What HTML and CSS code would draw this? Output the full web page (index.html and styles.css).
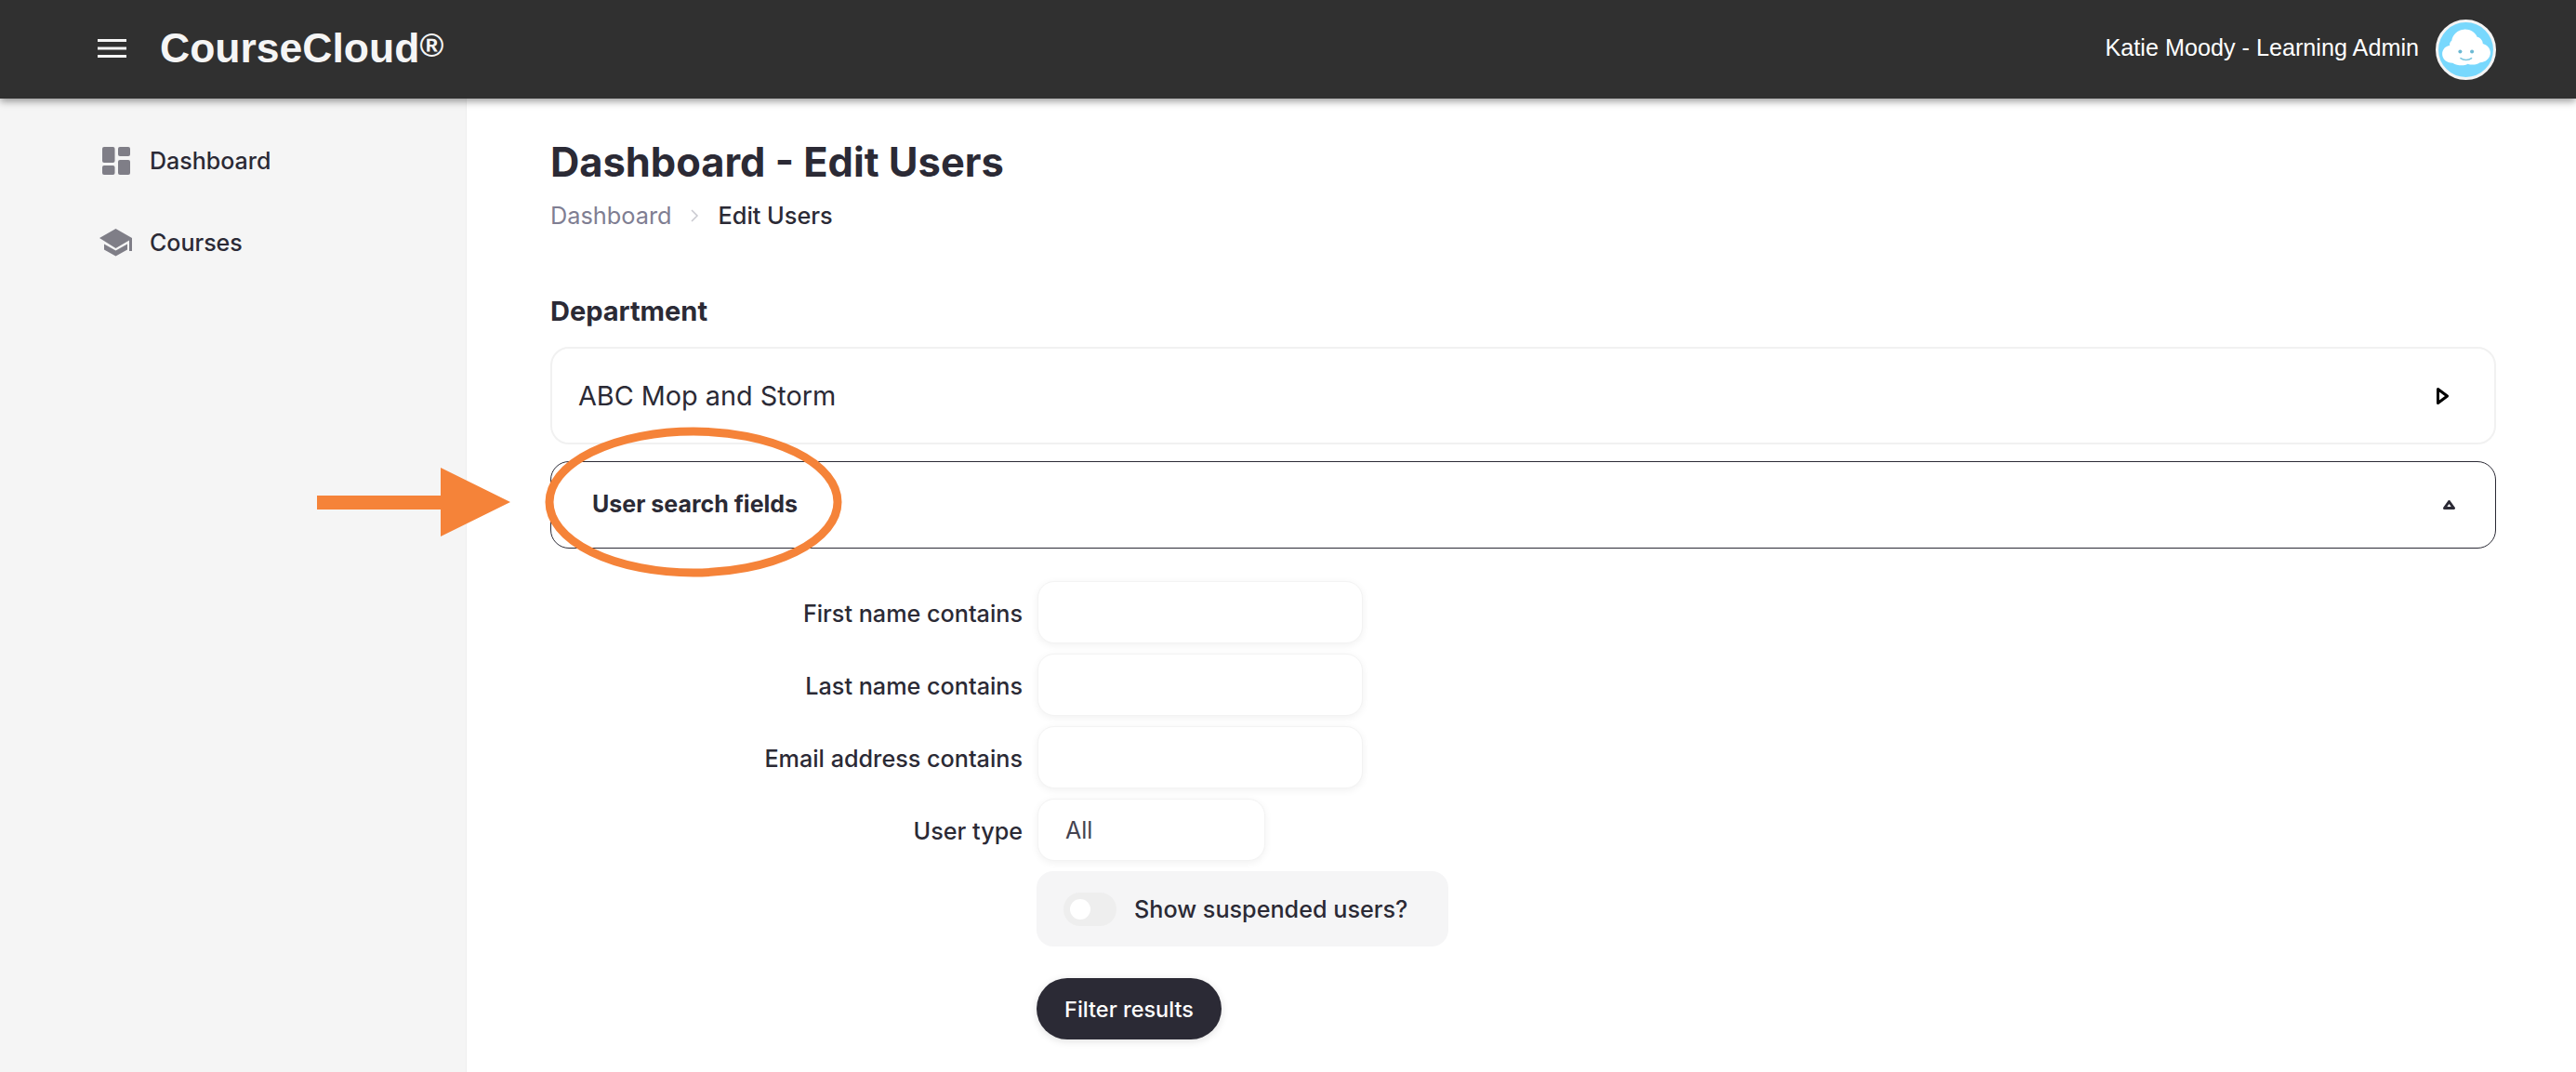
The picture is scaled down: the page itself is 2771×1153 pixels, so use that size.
FILE: index.html
```html
<!DOCTYPE html>
<html lang="en">
<head>
<meta charset="utf-8">
<title>Edit Users</title>
<link rel="stylesheet" href="styles.css">
</head>
<body>
<header class="topbar">
  <div class="brand">
    <svg class="burger" viewBox="0 0 31 20" aria-hidden="true"><path d="M0 0h31v3H0zM0 8.500h31v3H0zM0 17h31v3H0z"/></svg>
    <span class="brand-name">CourseCloud<span class="brand-mark">®</span></span>
  </div>
  <div class="user">
    <span class="user-name">Katie Moody - Learning Admin</span>
    <svg class="avatar" viewBox="0 0 64 64" aria-hidden="true">
      <circle cx="32" cy="32" r="30.500" fill="#78d8fd" stroke="#f4f4f4" stroke-width="3"/>
      <path class="cloud" d="M18 46c-6.500 0-11-4-11-9.500 0-5 3.500-8.500 8-9-.5-2 .5-4 2-5 1-7 7-12 13-12 6-.5 12 3 14 8 3 .5 6 3.500 6 7 5 1.500 8 5 8 9.500 0 6-5 10.500-11 10.500-3 2.500-9 3-13 1.500-4 2.500-11 2-16-1z" fill="#fff"/>
      <circle cx="26" cy="34" r="2" fill="#6cb9d3"/>
      <circle cx="38.500" cy="34" r="2" fill="#6cb9d3"/>
      <path d="M26.500 41c3 2.500 8.500 2.500 11.500 0" fill="none" stroke="#7cc6de" stroke-width="1.500" stroke-linecap="round"/>
    </svg>
  </div>
</header>
<div class="layout">
  <nav class="sidebar">
    <a class="nav-item">
      <svg class="nav-icon" viewBox="0 0 36 30" aria-hidden="true">
        <rect x="3" y="0" width="13.500" height="17" rx="2"/><rect x="20" y="0" width="13" height="10" rx="2"/><rect x="3" y="20" width="13.500" height="10" rx="2"/><rect x="20" y="14" width="13" height="16" rx="2"/>
      </svg>
      <span>Dashboard</span>
    </a>
    <a class="nav-item">
      <svg class="nav-icon" viewBox="0 0 36 30" aria-hidden="true">
        <path d="M17.500 0 35 10v14h-3V12.500L17.500 21 0 10z"/><path d="M5 16.500 17.500 23.500 30 16.500v6L17.500 29.500 5 22.500z"/>
      </svg>
      <span>Courses</span>
    </a>
  </nav>
  <main class="content">
    <h1 class="title">Dashboard - Edit Users</h1>
    <div class="crumbs"><span class="crumb-link">Dashboard</span><svg class="crumb-sep" viewBox="0 0 10 16" aria-hidden="true"><path d="M2 2l6 6-6 6"/></svg><span>Edit Users</span></div>
    <h2 class="section">Department</h2>
    <div class="panel panel-dept">
      <span>ABC Mop and Storm</span>
      <svg class="tri-right" viewBox="0 0 13 18" aria-hidden="true"><path d="M1.500 1.500 11.500 9l-10 7.500z"/></svg>
    </div>
    <div class="panel panel-search">
      <span class="panel-title">User search fields</span>
      <svg class="tri-up" viewBox="0 0 13 10" aria-hidden="true"><path d="M6.500 1.500 11.500 8.500H1.500z"/></svg>
    </div>
    <form class="form">
      <label class="form-label" for="f1">First name contains</label>
      <input class="field" id="f1" type="text">
      <label class="form-label" for="f2">Last name contains</label>
      <input class="field" id="f2" type="text">
      <label class="form-label" for="f3">Email address contains</label>
      <input class="field" id="f3" type="text">
      <label class="form-label" for="f4">User type</label>
      <div class="field field-select" id="f4">All</div>
      <div class="check-box">
        <span class="toggle"><span class="knob"></span></span>
        <span>Show suspended users?</span>
      </div>
      <button class="filter" type="button">Filter results</button>
    </form>
  </main>
</div>
<svg class="annotation" width="580" height="170" viewBox="0 0 580 170" aria-hidden="true">
  <path d="M0 74h133V44l75 37-75 37V89H0z" fill="#f58339"/>
  <ellipse cx="405" cy="81" rx="155" ry="76" fill="none" stroke="#f58339" stroke-width="9"/>
</svg>
</body>
</html>
```
FILE: styles.css
```css
* { box-sizing: border-box; }
html, body { margin: 0; height: 100%; }
body {
  font-family: Inter, "Liberation Sans", sans-serif;
  color: #2b2a35;
  background: #fff;
  overflow: hidden;
  position: relative;
}
.topbar {
  height: 106px;
  background: #303030;
  color: #fff;
  display: flex;
  align-items: center;
  justify-content: space-between;
  padding: 0 86px 0 105px;
  box-shadow: 0 3px 8px rgba(0, 0, 0, .4);
  position: relative;
  z-index: 2;
}
.brand { display: flex; align-items: center; gap: 36px; }
.burger { width: 31px; height: 20px; fill: #f5f5f5; margin-bottom: 2px; }
.brand-name {
  font-family: "Liberation Sans", Arial, sans-serif;
  font-weight: 700;
  font-size: 44.500px;
  line-height: 50px;
  color: #f5f5f5;
  margin-bottom: 3px;
}
.brand-mark { font-size: 35px; vertical-align: 6px; line-height: 0; }
.user { display: flex; align-items: center; gap: 18px; }
.user-name {
  font-family: "Liberation Sans", Arial, sans-serif;
  font-size: 25.200px;
  margin-bottom: 4px;
}
.avatar { width: 65px; height: 65px; }
.cloud { filter: blur(.5px); }
.layout { display: flex; height: 1047px; }
.sidebar {
  width: 502px;
  flex: none;
  background: #f5f5f5;
  border-right: 1px solid #eee;
  padding: 52px 0 0 107px;
  display: flex;
  flex-direction: column;
  gap: 58px;
}
.nav-item {
  display: flex;
  align-items: center;
  gap: 18px;
  height: 30px;
  font-size: 25px;
  font-weight: 500;
}
.nav-icon { width: 36px; height: 30px; fill: #7f7e87; flex: none; }
.content { flex: 1; padding: 41px 86px 0 90px; min-width: 0; }
.title { margin: 0; font-size: 43.400px; font-weight: 700; line-height: 54px; }
.crumbs {
  display: flex;
  align-items: center;
  gap: 20px;
  margin-top: 13px;
  font-size: 25.300px;
  line-height: 36px;
  font-weight: 500;
}
.crumb-link { color: #7f7e92; font-weight: 400; }
.crumb-sep { width: 10px; height: 16px; fill: none; stroke: #c9c9d0; stroke-width: 1.500; }
.section { margin: 66px 0 0; font-size: 29px; line-height: 38px; font-weight: 700; }
.panel {
  display: flex;
  align-items: center;
  justify-content: space-between;
  border-radius: 20px;
}
.panel-dept {
  margin-top: 19px;
  height: 105px;
  border: 2px solid #f1f1f1;
  padding: 0 49px 0 28px;
  font-size: 28.800px;
}
.panel-search {
  margin-top: 18px;
  height: 94px;
  border: 1.500px solid #2b2a35;
  padding: 0 43px 0 44px;
  font-size: 25px;
  font-weight: 700;
}
.panel-title { margin-bottom: 2px; }
.tri-right { width: 13px; height: 18px; fill: none; stroke: #000; stroke-width: 3; stroke-linejoin: round; }
.tri-up { width: 13px; height: 10px; fill: none; stroke: #2b2a35; stroke-width: 3; stroke-linejoin: round; }
.form {
  margin-top: 35px;
  display: grid;
  grid-template-columns: 508px auto;
  column-gap: 16px;
  row-gap: 11px;
  justify-items: start;
  align-items: center;
}
.form-label { justify-self: end; font-size: 25.200px; font-weight: 500; margin-top: 3px; }
.field {
  width: 350px;
  height: 67px;
  border: 1px solid #f3f3f3;
  border-radius: 18px;
  background: #fff;
  box-shadow: 0 2px 8px rgba(0, 0, 0, .06);
  padding: 0 29px;
  font: inherit;
}
.field-select {
  width: 245px;
  display: flex;
  align-items: center;
  font-size: 25px;
  color: #444350;
}
.check-box {
  grid-column: 2;
  margin-left: -1px;
  width: 443px;
  height: 81px;
  background: #f5f5f6;
  border-radius: 18px;
  display: flex;
  align-items: center;
  gap: 19px;
  padding: 0 29px;
  font-size: 25.200px;
  font-weight: 500;
}
.toggle {
  width: 57px;
  height: 36px;
  border-radius: 18px;
  background: #eeeeee;
  display: flex;
  align-items: center;
  padding-left: 7px;
  flex: none;
}
.knob { width: 22px; height: 22px; border-radius: 50%; background: #fff; }
.filter {
  grid-column: 2;
  margin: 23px 0 0 -1px;
  width: 199px;
  height: 66px;
  border: 0;
  border-radius: 33px;
  background: #2b2a35;
  color: #fff;
  font: 500 23.500px Inter, "Liberation Sans", sans-serif;
  box-shadow: 0 2px 8px rgba(0, 0, 0, .12);
}
.annotation { position: absolute; left: 341px; top: 459px; z-index: 3; }
```
